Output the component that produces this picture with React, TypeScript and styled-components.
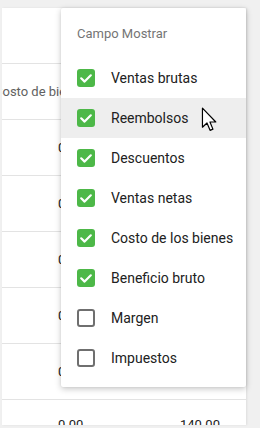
import React from "react";
import styled, { createGlobalStyle } from "styled-components";

const GlobalStyle = createGlobalStyle`
  body {
    margin: 0;
    background: #f0f0f0;
    font-family: Roboto, "Liberation Sans", sans-serif;
  }
`;

const fields = [
  { label: "Ventas brutas", checked: true },
  { label: "Reembolsos", checked: true, hover: true },
  { label: "Descuentos", checked: true },
  { label: "Ventas netas", checked: true },
  { label: "Costo de los bienes", checked: true },
  { label: "Beneficio bruto", checked: true },
  { label: "Margen", checked: false },
  { label: "Impuestos", checked: false },
];

function App() {
  return (
    <Page>
      <GlobalStyle />
      <Panel>
        <Table>
          <Row />
          <Row>
            <HeadCell>Costo de bienes</HeadCell>
          </Row>
          {[0, 1, 2, 3, 4, 5].map((i) => (
            <Row key={i}>
              <Cell />
              <Cell>0.00</Cell>
              <Cell>140.00</Cell>
            </Row>
          ))}
        </Table>
      </Panel>

      <Menu>
        <MenuTitle>Campo Mostrar</MenuTitle>
        {fields.map((f) => (
          <MenuItem key={f.label} $hover={f.hover}>
            <Box $checked={f.checked}>
              {f.checked && (
                <svg width="18" height="18" viewBox="0 0 18 18">
                  <path
                    d="M4.2 9.3 L7.6 12.6 L13.8 6.3"
                    fill="none"
                    stroke="#fff"
                    strokeWidth="2.2"
                    strokeLinecap="round"
                    strokeLinejoin="round"
                  />
                </svg>
              )}
            </Box>
            {f.label}
          </MenuItem>
        ))}
      </Menu>

      <Cursor width="16" height="25" viewBox="0 0 13 21">
        <path
          d="M1 1 L1 17 L4.8 13.4 L7.4 19.6 L9.8 18.6 L7.3 12.6 L12.2 12.6 Z"
          fill="#fff"
          stroke="#000"
          strokeWidth="1"
          strokeLinejoin="round"
        />
      </Cursor>
    </Page>
  );
}

export default App;

const Page = styled.div`
  position: relative;
  height: 428px;
  padding: 8px 14px 0 2px;
  box-sizing: border-box;
  overflow: hidden;
`;

const Panel = styled.div`
  height: 417px;
  background: #fff;
  overflow: hidden;
  box-shadow: 1px 0 2px rgba(0, 0, 0, 0.08);
`;

const Table = styled.div`
  margin-left: -8px;
`;

const Row = styled.div`
  display: grid;
  grid-template-columns: 64px 122px 1fr;
  align-items: center;
  height: 55px;
  border-bottom: 1px solid #e3e3e3;
  font-size: 13px;
  color: #212121;
  &:last-child {
    align-items: start;
    padding-top: 17px;
    box-sizing: border-box;
  }
`;

const HeadCell = styled.div`
  white-space: nowrap;
  color: #616161;
  font-size: 13px;
`;

const Cell = styled.div`
  white-space: nowrap;
`;

const Menu = styled.div`
  position: absolute;
  left: 61px;
  top: 8px;
  width: 185px;
  padding: 16px 0 9px;
  background: #fff;
  border-radius: 2px;
  box-shadow: 0 2px 6px rgba(0, 0, 0, 0.22), 0 0 2px rgba(0, 0, 0, 0.08);
`;

const MenuTitle = styled.div`
  padding: 0 16px;
  margin-bottom: 14px;
  line-height: 20px;
  font-size: 13px;
  color: #757575;
`;

const MenuItem = styled.div<{ $hover?: boolean }>`
  display: flex;
  align-items: center;
  gap: 16px;
  height: 40px;
  padding: 0 16px;
  font-size: 14px;
  color: #212121;
  white-space: nowrap;
  background: ${({ $hover }) => ($hover ? "#eeeeee" : "transparent")};
`;

const Box = styled.span<{ $checked?: boolean }>`
  display: flex;
  flex-shrink: 0;
  width: 18px;
  height: 18px;
  box-sizing: border-box;
  border-radius: 3px;
  background: ${({ $checked }) => ($checked ? "#4db848" : "transparent")};
  border: ${({ $checked }) => ($checked ? "none" : "2px solid #6f6f6f")};
`;

const Cursor = styled.svg`
  position: absolute;
  left: 201px;
  top: 107px;
`;
